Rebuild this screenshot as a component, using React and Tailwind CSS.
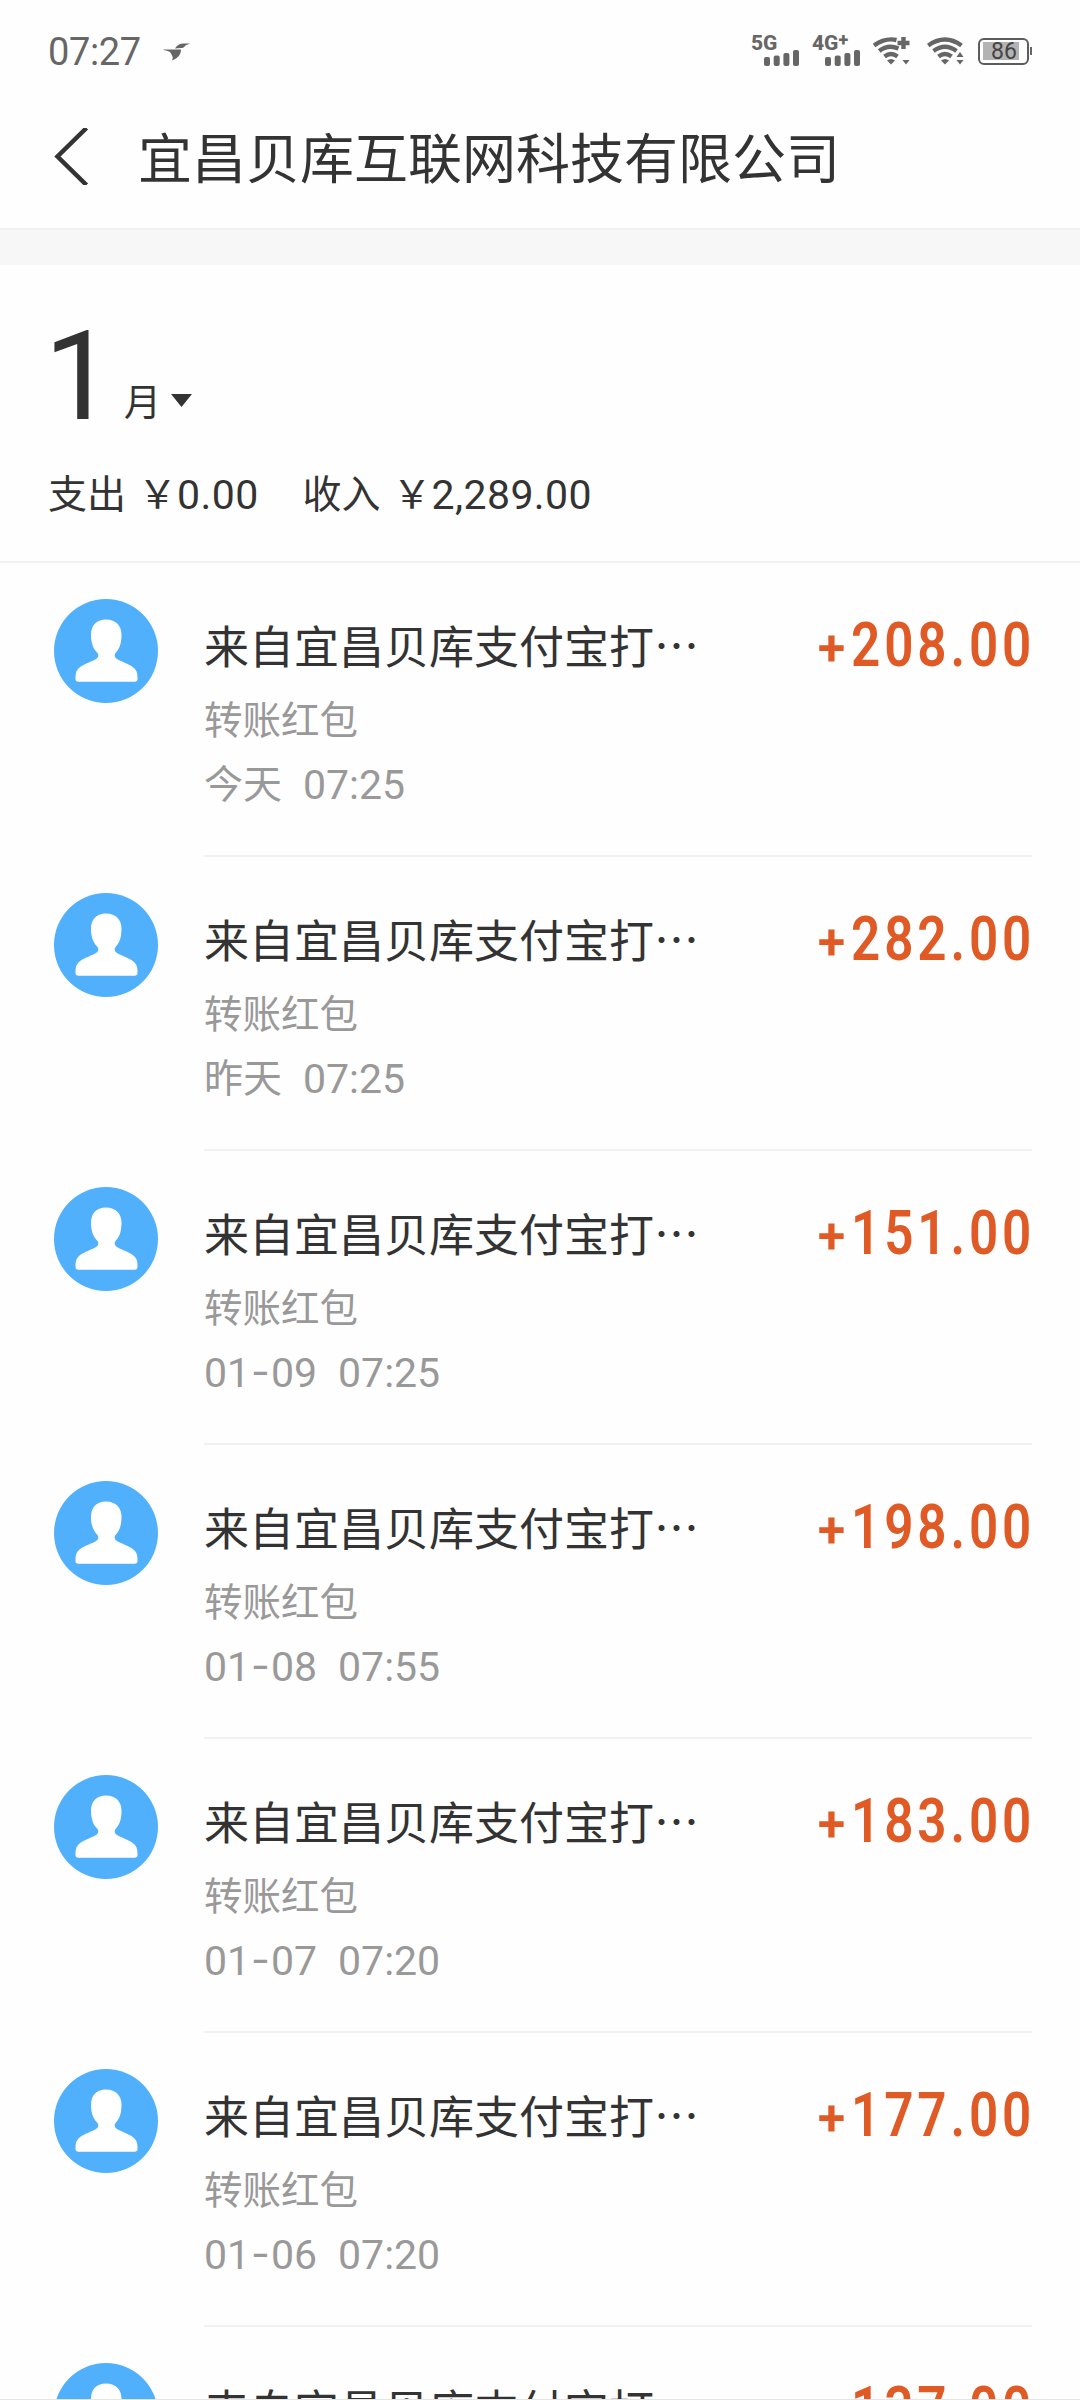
import React from 'react';

const transactions = [
  { day: '今天', time: '07:25', amount: '208.00' },
  { day: '昨天', time: '07:25', amount: '282.00' },
  { day: '01-09', time: '07:25', amount: '151.00' },
  { day: '01-08', time: '07:55', amount: '198.00' },
  { day: '01-07', time: '07:20', amount: '183.00' },
  { day: '01-06', time: '07:20', amount: '177.00' },
  { amount: '137.00' },
];

const BirdIcon = () => (
  <svg className="ml-[22px] mt-px h-[18px] w-[27px]" viewBox="0 0 27 18" fill="#666">
    <path d="M12 5.500C14 2 17 .5 20 .5h7c-2 1-4 1.200-5 2.500-1 1.500-2 2-4 2z" />
    <path d="M0 6.500h18c0 5-3 8.500-9 11 1-2 1-3.500 0-5-1-2-1-3-3-4C4 7.800 2 7.500 0 6.500z" />
  </svg>
);

const SignalBars = () => (
  <svg className="h-4 w-[35px]" viewBox="0 0 35 16" fill="#666">
    <rect x="0" y="7" width="6" height="9" rx="2" />
    <rect x="9.700" y="5.500" width="6" height="10.500" rx="2" />
    <rect x="19.400" y="3" width="6" height="13" rx="2" />
    <rect x="29" y="0" width="6" height="16" rx="2" />
  </svg>
);

const Signal = ({ label, plus }) => (
  <div className="flex w-12 flex-col">
    <span className="flex h-[14px] whitespace-nowrap text-[21px] font-extrabold leading-[14px]">
      {label}
      {plus && <span className="-mt-[3px] text-[18px]">+</span>}
    </span>
    <div className="ml-[13px]">
      <SignalBars />
    </div>
  </div>
);

const WifiIcon = ({ plus }) => (
  <svg className="h-7 w-[37px]" viewBox="0 0 37 28" fill="none" stroke="#666" strokeWidth="4.400">
    <path d={plus ? 'M1 8.500Q12 .5 23.500 3' : 'M1.200 8.500Q18 -3.500 34.500 8.500'} />
    <path d={plus ? 'M6.200 14Q15 7 25.500 11.500' : 'M6.500 14Q18 5.500 29.500 14'} />
    <path d="M11.500 19.500Q18 14.500 24.500 19.500" />
    <path d="M14 23.500q4-3 8 0l-4 4z" fill="#666" stroke="none" />
    {plus && <path d="M30.500 0v12M24.500 6h12" />}
    {!plus && <path d="M33 15l3.500 5h-7z" fill="#666" stroke="none" />}
    <path d="M29.500 23h7l-3.500 4.500z" fill="#666" stroke="none" />
  </svg>
);

const Battery = () => (
  <div className="flex items-center">
    <div className="flex h-[27px] w-[51px] items-center rounded-[6px] border-2 border-[#5c5c5c] p-[3px]">
      <div className="flex h-[18px] w-9 items-center bg-[#b3b3b3]">
        <span className="pl-2 text-[23px] leading-none text-[#444]">86</span>
      </div>
    </div>
    <div className="ml-px h-2 w-0.5 bg-[#666]" />
  </div>
);

const StatusBar = () => (
  <div className="flex h-[102px] items-center pl-12 pr-12 text-[#666]">
    <span className="mt-px text-[38px] leading-none tracking-[-0.4px]">07:27</span>
    <BirdIcon />
    <div className="ml-auto flex items-center">
      <Signal label="5G" />
      <div className="ml-[13px]">
        <Signal label="4G" plus />
      </div>
      <div className="ml-[13px]">
        <WifiIcon plus />
      </div>
      <div className="ml-[17px]">
        <WifiIcon />
      </div>
      <div className="ml-[14px]">
        <Battery />
      </div>
    </div>
  </div>
);

const Header = () => (
  <div className="flex h-[126px] items-start pl-[54px]">
    <svg className="mt-[26px] h-[57px] w-[35px]" viewBox="0 0 35 57" fill="none" stroke="#333" strokeWidth="4.500">
      <path d="M32.500 0 3.500 28.500 32.500 57" />
    </svg>
    <h1 className="ml-[49px] mt-[32px] text-[54px] leading-[54px]">宜昌贝库互联网科技有限公司</h1>
  </div>
);

const Amount = ({ children }) => (
  <span className="text-[41px] tracking-[0.4px]">{children}</span>
);

const Summary = () => (
  <div className="h-[298px] border-b-2 border-[#f1f1f1] pl-12">
    <div className="flex h-[157px] items-end">
      <span className="-ml-1 -mb-[14px] w-20 text-[125px] leading-[118px]">1</span>
      <span className="text-[37px] leading-[37px]">月</span>
      <svg className="mb-[15px] ml-[10px] h-[13px] w-[21px]" viewBox="0 0 21 13" fill="#333">
        <path d="M0 0h21L10.500 13z" />
      </svg>
    </div>
    <div className="mt-[53px] flex text-[39px] leading-[40px]">
      <span>支出</span>
      <span className="ml-3">￥</span>
      <Amount>0.00</Amount>
      <span className="ml-11">收入</span>
      <span className="ml-3">￥</span>
      <Amount>2,289.00</Amount>
    </div>
  </div>
);

const Avatar = () => (
  <svg className="mt-9 h-[104px] w-[104px] shrink-0" viewBox="0 0 104 104">
    <circle cx="52" cy="52" r="52" fill="#50b0fc" />
    <path
      d="M52 20.500c-10 0-15 6.500-15 15 0 10 3 15 6.500 18.500 1.500 2 1 4.500-1.500 6-7 4-14 5.500-18 10-2.500 3-2.500 6-2.500 10 0 2 1 2.700 3 2.700h56c2 0 3-.7 3-2.700 0-4 0-7-2.500-10-4-4.500-11-6-18-10-2.500-1.500-3-4-1.500-6 3.500-3.500 6-8.500 6-18.500 0-8.500-5.500-15-15.500-15z"
      fill="#fff"
    />
  </svg>
);

const Day = ({ value }) => {
  const [month, date] = value.split('-');
  if (!date) return <span className="text-[39px]">{value}</span>;
  return (
    <span className="flex">
      {month}
      <span className="-mt-[2px] px-px font-[Inter]">-</span>
      {date}
    </span>
  );
};

const Transaction = ({ day, time, amount }) => (
  <li className="flex h-[294px] pl-[54px] pr-12">
    <Avatar />
    <div className="ml-[46px] flex flex-1 justify-between border-b-2 border-[#f1f1f1]">
      <div>
        <p className="mt-[63px] text-[45px] leading-[45px]">来自宜昌贝库支付宝打⋯</p>
        {day && (
          <>
            <p className="mt-[30px] text-[38.500px] leading-[40px] text-[#999]">转账红包</p>
            <p className="mt-6 flex gap-[21px] text-[41px] leading-[40px] text-[#999]">
              <Day value={day} />
              <span>{time}</span>
            </p>
          </>
        )}
      </div>
      <div className="relative mt-[51px] flex h-[62px] font-semibold leading-[62px] text-[#e05a26]">
        <span className="absolute left-[2px] top-[3px] text-[50px]">+</span>
        <span className="-mr-[3px] origin-right scale-x-84 text-[61px] tracking-[4.600px]">{amount}</span>
      </div>
    </div>
  </li>
);

export default function App() {
  return (
    <div className="relative h-[2400px] w-[1080px] overflow-hidden bg-[#fefefe] font-[Roboto,'Noto_Sans_CJK_SC',sans-serif] text-[#333]">
      <StatusBar />
      <Header />
      <div className="h-[37px] border-t-2 border-[#f1f1f1] bg-[#f7f7f7]" />
      <Summary />
      <ul>
        {transactions.map((item) => (
          <Transaction key={item.amount} {...item} />
        ))}
      </ul>
      <div className="absolute bottom-0 left-0 h-px w-full bg-[#e5e5e5]" />
    </div>
  );
}
